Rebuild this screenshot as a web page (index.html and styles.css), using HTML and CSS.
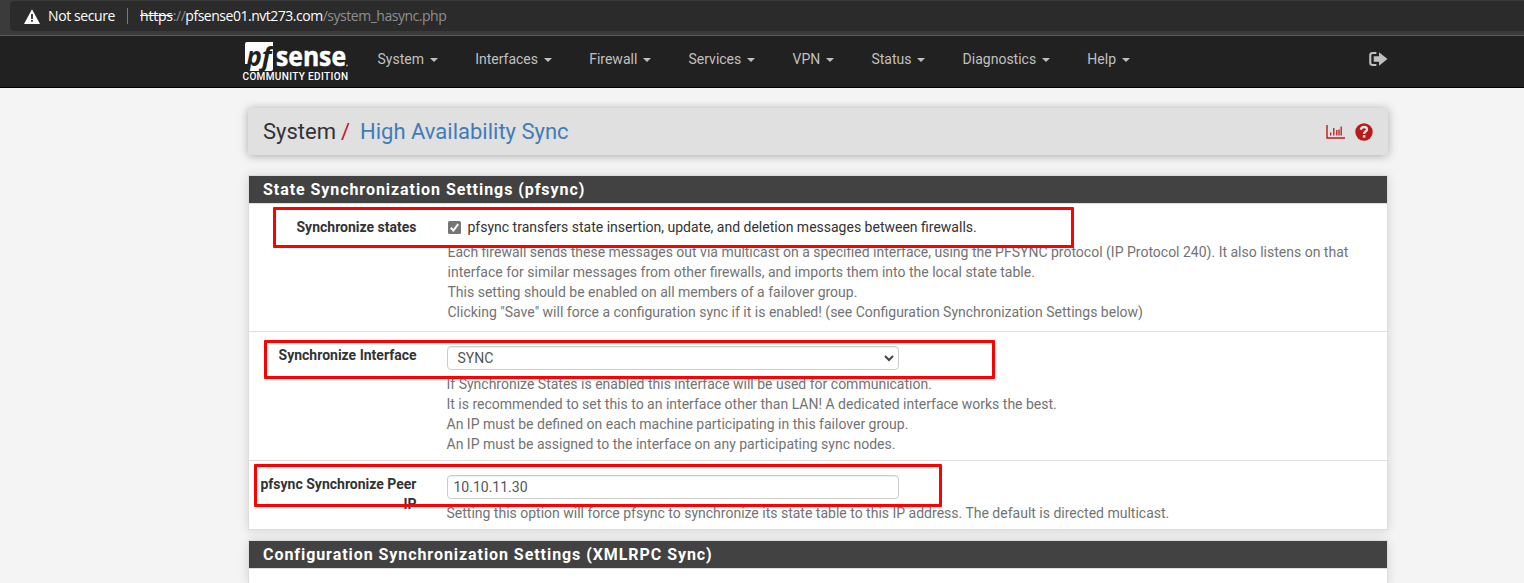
FILE: index.html
```html
<!DOCTYPE html>
<html lang="en">
<head>
<meta charset="utf-8">
<title>System: High Availability Sync</title>
<link rel="stylesheet" href="styles.css">
</head>
<body>
<div class="browser">
  <div class="address">
    <svg class="warn" width="16" height="15" viewBox="0 0 16 15"><path d="M8 .2 16 15H0Z" fill="#fff"/><path d="M7.1 5h1.8v5H7.1zM7.1 11h1.8v1.8H7.1z" fill="#2b2b2b"/></svg>
    <span class="insecure">Not secure</span>
    <span class="divider"></span>
    <span class="url"><s>https</s>://<b>pfsense01.nvt273.com</b>/system_hasync.php</span>
  </div>
</div>
<nav class="navbar">
  <a class="brand">
    <svg width="110" height="48" viewBox="0 0 110 48">
      <path d="M5 6h26v27q0 2-2 2H6l1.500-7H3V8q0-2 2-2Z" fill="#fff"/>
      <text class="logo-pf" x="4.500" y="30" textLength="25" lengthAdjust="spacingAndGlyphs">pf</text>
      <text class="logo-sense" x="34" y="29.500" textLength="70" lengthAdjust="spacingAndGlyphs">sense</text>
      <circle cx="105" cy="29.500" r="1" fill="#aaa"/>
      <text class="logo-edition" x="0.500" y="44" textLength="105.500">COMMUNITY EDITION</text>
    </svg>
  </a>
  <ul class="menu">
    <li>System<i class="caret"></i></li>
    <li>Interfaces<i class="caret"></i></li>
    <li>Firewall<i class="caret"></i></li>
    <li>Services<i class="caret"></i></li>
    <li>VPN<i class="caret"></i></li>
    <li>Status<i class="caret"></i></li>
    <li>Diagnostics<i class="caret"></i></li>
    <li>Help<i class="caret"></i></li>
  </ul>
  <svg class="logout" width="19" height="14" viewBox="0 0 18 14" preserveAspectRatio="none"><path d="M7 1H3.500Q1.200 1 1.200 3.300v7.400Q1.200 13 3.500 13H7" fill="none" stroke="#c0c0c0" stroke-width="2"/><path d="M4.500 4.300h5V.3L17.500 7l-8 6.700v-4h-5Z" fill="#c0c0c0"/></svg>
</nav>
<main class="container">
  <header class="page-header">
    <h1><span>System</span><em>/</em><a>High Availability Sync</a></h1>
    <div class="tools">
      <svg width="19" height="14" viewBox="0 0 19 14"><path d="M1 0v13h18" fill="none" stroke="#b71c1c" stroke-width="1.400"/><path d="M4.700 10.500V7.500M7.800 10.500V3M10.800 10.500V5M15.200 10.500V1.500M13 10.500V4.500" stroke="#b71c1c" stroke-width="1.300"/></svg>
      <svg width="18" height="18" viewBox="0 0 18 18"><circle cx="9" cy="9" r="8.700" fill="#b71c1c"/><path d="M5.800 6.800Q6.300 4 9 4q3 0 3 2.500 0 1.200-1.500 2.100Q9.100 9.400 9.100 11" fill="none" stroke="#e0e0e0" stroke-width="2.300"/><path d="M7.800 12h2.600v2.600H7.800z" fill="#e0e0e0"/></svg>
    </div>
  </header>

  <section class="panel">
    <h2>State Synchronization Settings (pfsync)</h2>
    <div class="row row-states">
      <label>Synchronize states</label>
      <div class="field">
        <div class="check"><svg width="13" height="13" viewBox="0 0 13 13"><rect width="13" height="13" rx="1.500" fill="#767676"/><path d="m2.800 6.800 2.600 2.700 4.800-6.300" fill="none" stroke="#fff" stroke-width="2"/></svg><span>pfsync transfers state insertion, update, and deletion messages between firewalls.</span></div>
        <p>Each firewall sends these messages out via multicast on a specified interface, using the PFSYNC protocol (IP Protocol 240). It also listens on that<br>interface for similar messages from other firewalls, and imports them into the local state table.<br>This setting should be enabled on all members of a failover group.<br>Clicking "Save" will force a configuration sync if it is enabled! (see Configuration Synchronization Settings below)</p>
      </div>
    </div>
    <div class="row row-interface">
      <label>Synchronize Interface</label>
      <div class="field">
        <div class="control select"><span>SYNC</span><svg width="10" height="7" viewBox="0 0 10 7"><path d="m1 1 4 4 4-4" fill="none" stroke="#444" stroke-width="2"/></svg></div>
        <p>If Synchronize States is enabled this interface will be used for communication.<br>It is recommended to set this to an interface other than LAN! A dedicated interface works the best.<br>An IP must be defined on each machine participating in this failover group.<br>An IP must be assigned to the interface on any participating sync nodes.</p>
      </div>
    </div>
    <div class="row row-peer">
      <label>pfsync Synchronize Peer<br>IP</label>
      <div class="field">
        <div class="control">10.10.11.30</div>
        <p>Setting this option will force pfsync to synchronize its state table to this IP address. The default is directed multicast.</p>
      </div>
    </div>
  </section>
  <section class="panel panel-last">
    <h2>Configuration Synchronization Settings (XMLRPC Sync)</h2>
  </section>
</main>
<div class="mark mark-states"></div>
<div class="mark mark-interface"></div>
<div class="mark mark-peer"></div>
</body>
</html>
```

FILE: styles.css
```css
* { box-sizing: border-box; }
body {
  margin: 0;
  height: 583px;
  display: flex;
  flex-direction: column;
  position: relative;
  background: #f4f4f4;
  color: #333;
  font: 14px/20px Roboto, sans-serif;
}
.browser {
  flex: none;
  height: 36px;
  padding: 1px 0 0 10px;
  background: #3b3b3b;
  border-bottom: 1px solid #5b5b5b;
}
.address {
  height: 30px;
  padding-left: 14px;
  display: flex;
  align-items: center;
  background: #2b2b2b;
  border-radius: 4px 0 0 4px;
  font: 14px/20px "Open Sans", "Noto Sans", sans-serif;
  color: #fff;
  white-space: nowrap;
}
.insecure { margin-left: 8px; width: 67px; letter-spacing: -.4px; }
.divider { width: 1px; height: 16px; margin: 0 12px; background: #777; }
.url { color: #8f8f8f; letter-spacing: -.48px; }
.url s, .url b { color: #fff; font-weight: 400; }
.url s { letter-spacing: -.2px; }
.navbar {
  flex: none;
  height: 52px;
  padding-left: 242px;
  display: flex;
  background: #212121;
  border-bottom: 1px solid #000;
  color: #c0c0c0;
}
.brand { width: 135.5px; }
.brand svg { display: block; }
.logo-pf { font: italic 700 27px "Open Sans", sans-serif; fill: #212121; }
.logo-sense { font: 700 26px "Open Sans", sans-serif; fill: #fff; stroke: #fff; stroke-width: .5px; }
.logo-edition { font: 500 10px Roboto, sans-serif; fill: #fff; }
.menu {
  display: flex;
  gap: 37.2px;
  margin: 0;
  padding: 13px 0 0;
  list-style: none;
}
.menu li { display: flex; align-items: center; height: 20px; }
.caret {
  margin-left: 6px;
  margin-top: 2px;
  border: 4px solid transparent;
  border-top-color: #c0c0c0;
  border-bottom: 0;
}
.logout { margin: 16px 136px 0 auto; }
.container {
  flex: 1;
  min-height: 0;
  width: 1140px;
  margin: 20px 0 0 248px;
  display: flex;
  flex-direction: column;
}
.page-header {
  flex: none;
  height: 47px;
  padding: 0 15px;
  display: flex;
  align-items: center;
  justify-content: space-between;
  background: #e0e0e0;
  border-radius: 2px;
  box-shadow: 0 1px 10px rgba(0, 0, 0, .3);
}
h1 { margin: 0; font-size: 22px; font-weight: 400; line-height: 46px; display: flex; }
h1 em { color: #c4161c; font-style: normal; margin: 0 11px 0 5px; }
h1 a { color: #3f7cb9; margin-left: -1px; }
.tools { display: flex; align-items: center; gap: 10px; }
.panel {
  flex: none;
  margin: 20px 0 0;
  background: #fff;
  border: 1px solid #ddd;
  box-shadow: 0 1px 10px rgba(0, 0, 0, .13);
}
.panel-last { flex: 1; min-height: 0; margin-top: 10px; border-bottom: 0; }
h2 {
  height: 28px;
  margin: 0;
  padding-left: 14px;
  background: #424242;
  border-bottom: 1px solid #ddd;
  color: #fff;
  font-size: 16px;
  line-height: 27px;
  font-weight: 700;
  letter-spacing: .94px;
}
.row { display: flex; }
.row + .row { border-top: 1px solid #ddd; }
.row label { width: 167.5px; margin-right: 30.5px; text-align: right; font-weight: 700; white-space: nowrap; }
.field p { margin: 0 0 0 -.5px; color: #737373; white-space: nowrap; }
.row-states { height: 127px; padding-top: 13px; }
.row-states .field { padding-left: 1px; }
.check { display: flex; align-items: center; gap: 6.5px; height: 20px; margin-bottom: 5px; }
.check svg { margin-top: 1px; }
.row-interface { height: 129px; padding-top: 14px; }
.row-interface label, .row-peer label { margin-top: -1px; }
.row-interface .field p { margin-top: 4px; }
.row-peer { height: 69px; padding-top: 14px; }
.row-peer .field p { margin-top: 4px; }
.control {
  width: 452px;
  height: 24px;
  padding: 0 5.5px;
  border: 1px solid #ccc;
  border-radius: 4px;
  box-shadow: inset 0 1px 1px rgba(0, 0, 0, .075);
  color: #555;
  line-height: 23px;
}
.select { display: flex; justify-content: space-between; align-items: center; padding: 0 4px 0 9.5px; }
.mark { position: absolute; border: 3px solid #f00; border-radius: 1px; }
.mark-states { left: 273px; top: 207px; width: 801px; height: 41px; }
.mark-interface { left: 264px; top: 340px; width: 731px; height: 39px; }
.mark-peer { left: 254px; top: 464px; width: 688px; height: 43px; }
```
